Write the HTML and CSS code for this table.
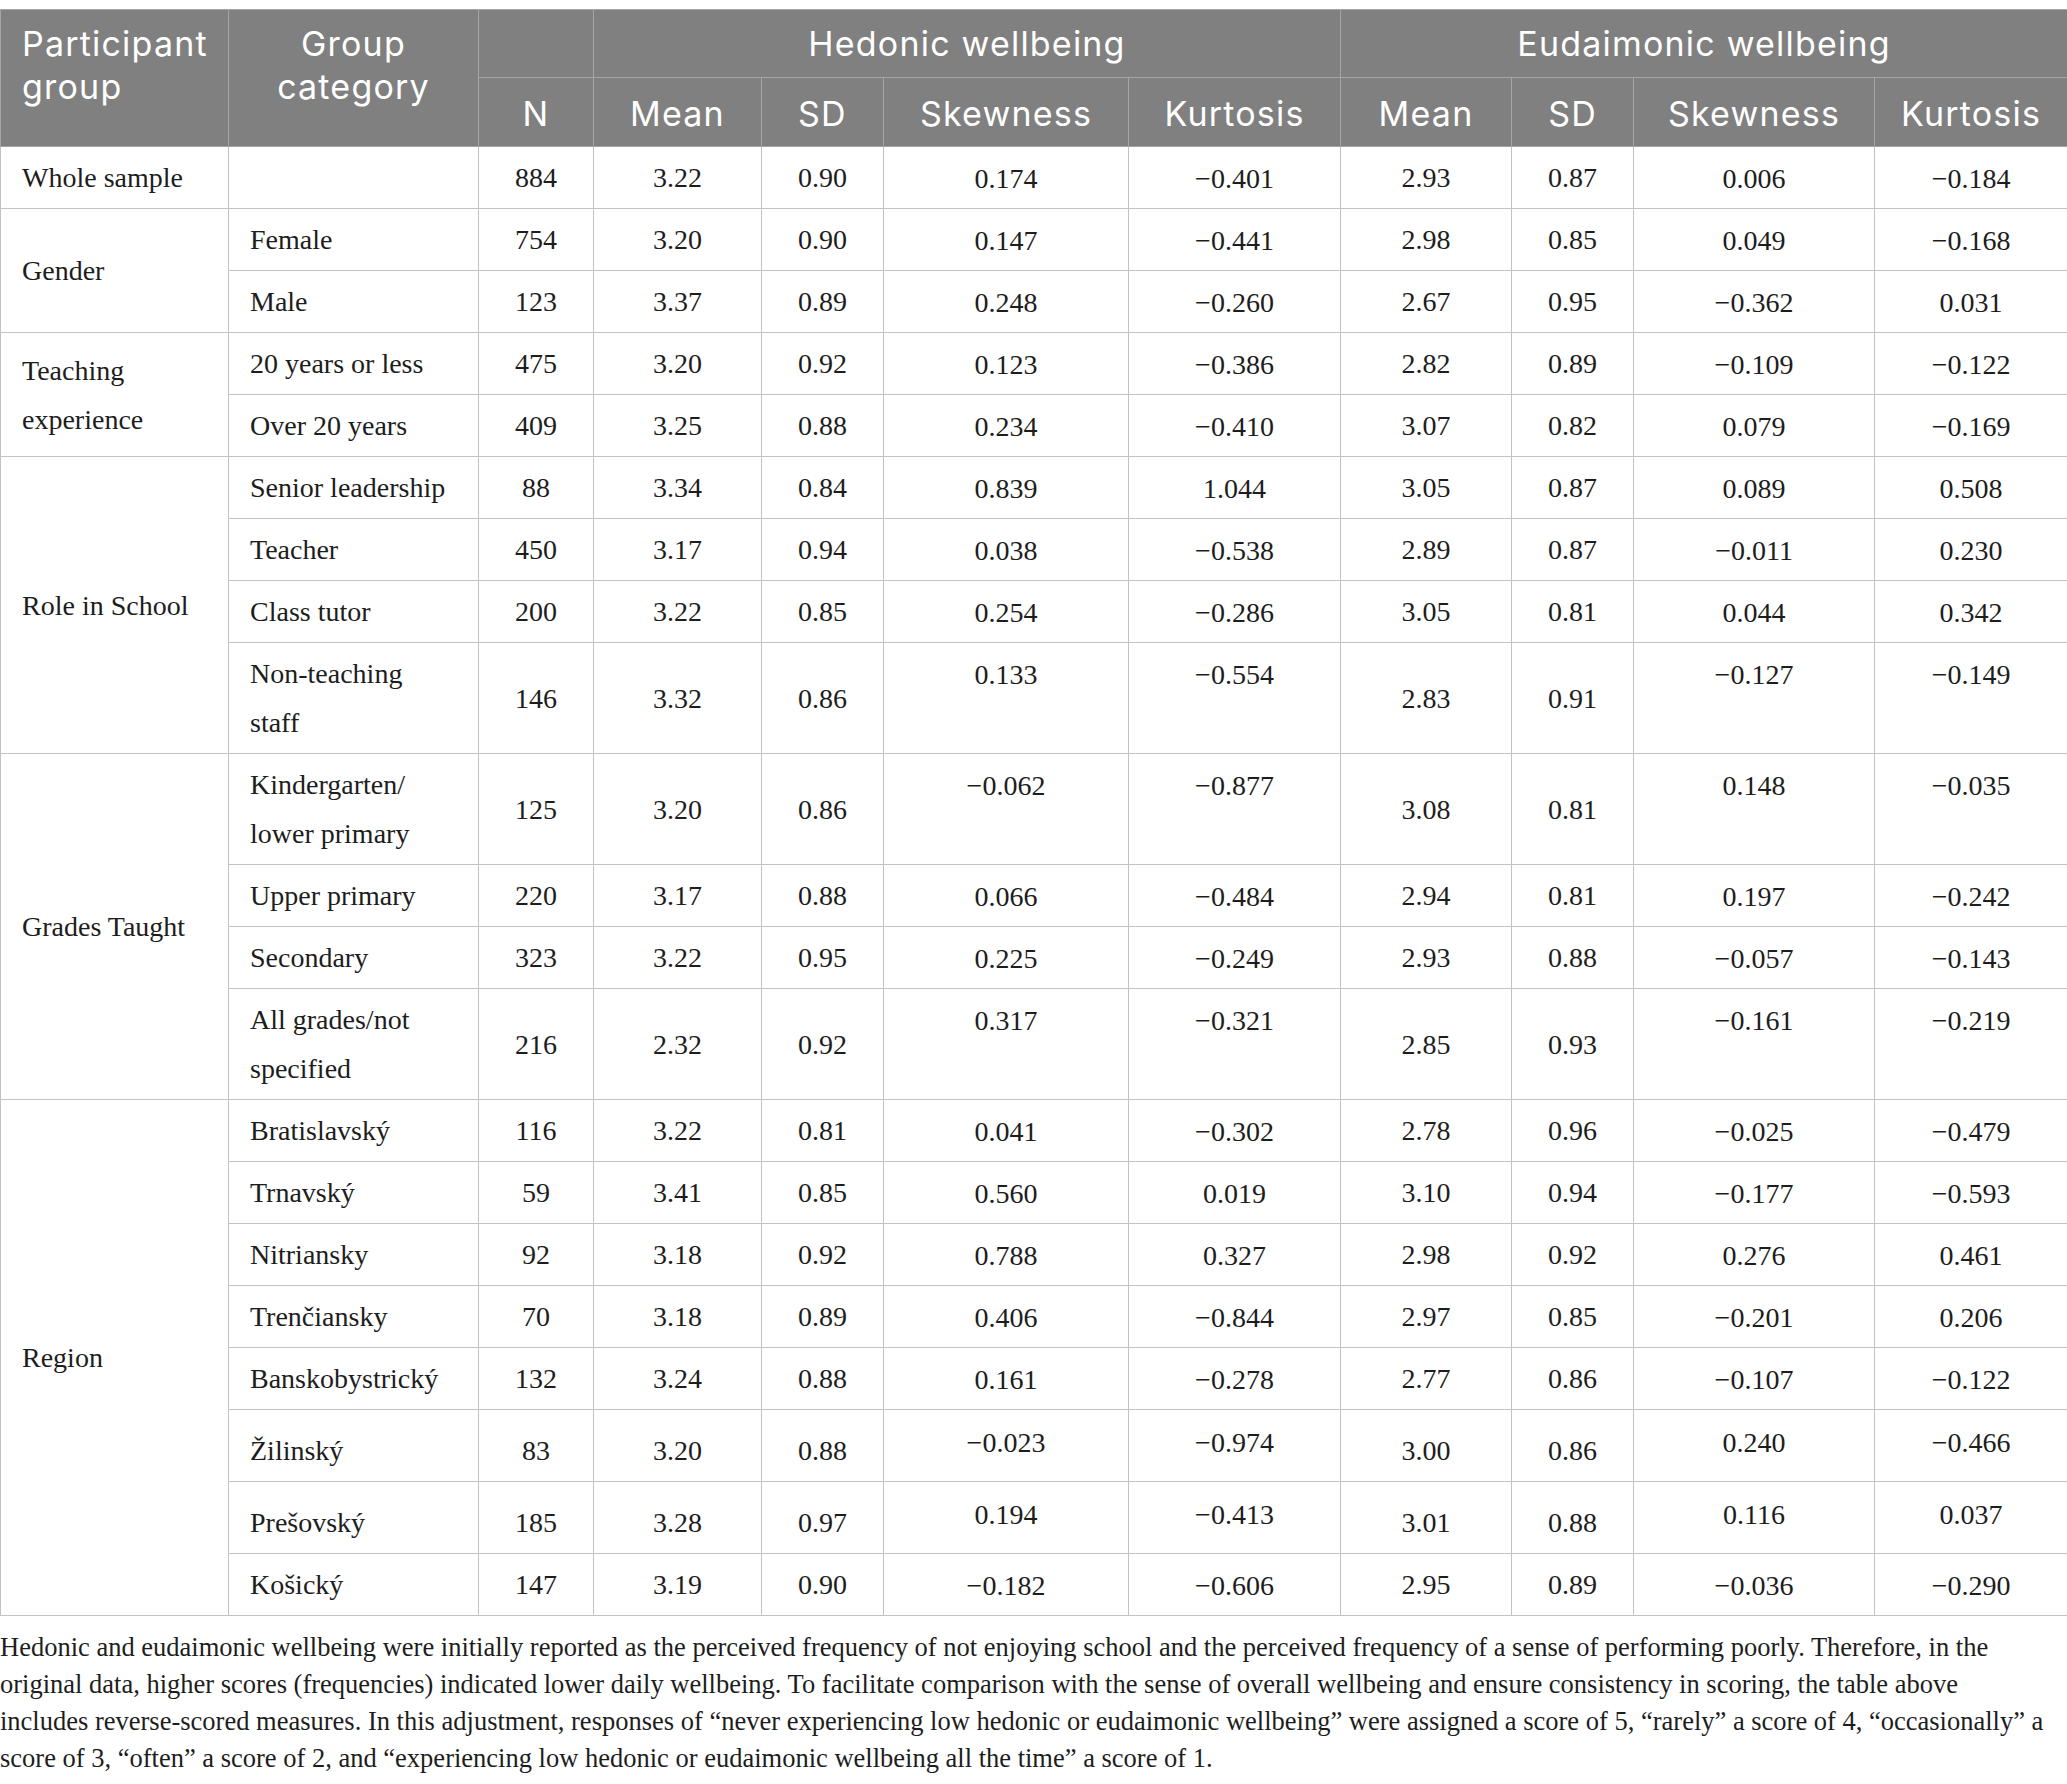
FILE: index.html
```html
<!DOCTYPE html>
<html lang="en">
<head>
<meta charset="utf-8">
<title>Wellbeing table</title>
<link rel="stylesheet" href="styles.css">
</head>
<body>
<table class="data">
  <colgroup>
    <col class="c1"><col class="c2"><col class="c3"><col class="c4"><col class="c5"><col class="c6"><col class="c7"><col class="c8"><col class="c9"><col class="c10"><col class="c11">
  </colgroup>
  <thead>
    <tr class="h1">
      <th rowspan="2" class="hl">Participant<br>group</th>
      <th rowspan="2" class="hc">Group<br>category</th>
      <th></th>
      <th colspan="4">Hedonic wellbeing</th>
      <th colspan="4">Eudaimonic wellbeing</th>
    </tr>
    <tr class="h2">
      <th>N</th>
      <th>Mean</th><th>SD</th><th>Skewness</th><th>Kurtosis</th>
      <th>Mean</th><th>SD</th><th>Skewness</th><th>Kurtosis</th>
    </tr>
  </thead>
  <tbody>
    <tr>
      <td class="grp">Whole sample</td><td class="cat"></td>
      <td class="n">884</td><td class="n">3.22</td><td class="n">0.90</td><td class="n t">0.174</td><td class="n t">−0.401</td><td class="n">2.93</td><td class="n">0.87</td><td class="n t">0.006</td><td class="n t">−0.184</td>
    </tr>
    <tr>
      <td class="grp" rowspan="2">Gender</td><td class="cat">Female</td>
      <td class="n">754</td><td class="n">3.20</td><td class="n">0.90</td><td class="n t">0.147</td><td class="n t">−0.441</td><td class="n">2.98</td><td class="n">0.85</td><td class="n t">0.049</td><td class="n t">−0.168</td>
    </tr>
    <tr>
      <td class="cat">Male</td>
      <td class="n">123</td><td class="n">3.37</td><td class="n">0.89</td><td class="n t">0.248</td><td class="n t">−0.260</td><td class="n">2.67</td><td class="n">0.95</td><td class="n t">−0.362</td><td class="n t">0.031</td>
    </tr>
    <tr>
      <td class="grp" rowspan="2">Teaching<br>experience</td><td class="cat">20 years or less</td>
      <td class="n">475</td><td class="n">3.20</td><td class="n">0.92</td><td class="n t">0.123</td><td class="n t">−0.386</td><td class="n">2.82</td><td class="n">0.89</td><td class="n t">−0.109</td><td class="n t">−0.122</td>
    </tr>
    <tr>
      <td class="cat">Over 20 years</td>
      <td class="n">409</td><td class="n">3.25</td><td class="n">0.88</td><td class="n t">0.234</td><td class="n t">−0.410</td><td class="n">3.07</td><td class="n">0.82</td><td class="n t">0.079</td><td class="n t">−0.169</td>
    </tr>
    <tr>
      <td class="grp" rowspan="4">Role in School</td><td class="cat">Senior leadership</td>
      <td class="n">88</td><td class="n">3.34</td><td class="n">0.84</td><td class="n t">0.839</td><td class="n t">1.044</td><td class="n">3.05</td><td class="n">0.87</td><td class="n t">0.089</td><td class="n t">0.508</td>
    </tr>
    <tr>
      <td class="cat">Teacher</td>
      <td class="n">450</td><td class="n">3.17</td><td class="n">0.94</td><td class="n t">0.038</td><td class="n t">−0.538</td><td class="n">2.89</td><td class="n">0.87</td><td class="n t">−0.011</td><td class="n t">0.230</td>
    </tr>
    <tr>
      <td class="cat">Class tutor</td>
      <td class="n">200</td><td class="n">3.22</td><td class="n">0.85</td><td class="n t">0.254</td><td class="n t">−0.286</td><td class="n">3.05</td><td class="n">0.81</td><td class="n t">0.044</td><td class="n t">0.342</td>
    </tr>
    <tr>
      <td class="cat">Non-teaching<br>staff</td>
      <td class="n">146</td><td class="n">3.32</td><td class="n">0.86</td><td class="n t">0.133</td><td class="n t">−0.554</td><td class="n">2.83</td><td class="n">0.91</td><td class="n t">−0.127</td><td class="n t">−0.149</td>
    </tr>
    <tr>
      <td class="grp" rowspan="4">Grades Taught</td><td class="cat">Kindergarten/<br>lower primary</td>
      <td class="n">125</td><td class="n">3.20</td><td class="n">0.86</td><td class="n t">−0.062</td><td class="n t">−0.877</td><td class="n">3.08</td><td class="n">0.81</td><td class="n t">0.148</td><td class="n t">−0.035</td>
    </tr>
    <tr>
      <td class="cat">Upper primary</td>
      <td class="n">220</td><td class="n">3.17</td><td class="n">0.88</td><td class="n t">0.066</td><td class="n t">−0.484</td><td class="n">2.94</td><td class="n">0.81</td><td class="n t">0.197</td><td class="n t">−0.242</td>
    </tr>
    <tr>
      <td class="cat">Secondary</td>
      <td class="n">323</td><td class="n">3.22</td><td class="n">0.95</td><td class="n t">0.225</td><td class="n t">−0.249</td><td class="n">2.93</td><td class="n">0.88</td><td class="n t">−0.057</td><td class="n t">−0.143</td>
    </tr>
    <tr>
      <td class="cat">All grades/not<br>specified</td>
      <td class="n">216</td><td class="n">2.32</td><td class="n">0.92</td><td class="n t">0.317</td><td class="n t">−0.321</td><td class="n">2.85</td><td class="n">0.93</td><td class="n t">−0.161</td><td class="n t">−0.219</td>
    </tr>
    <tr>
      <td class="grp" rowspan="8">Region</td><td class="cat">Bratislavský</td>
      <td class="n">116</td><td class="n">3.22</td><td class="n">0.81</td><td class="n t">0.041</td><td class="n t">−0.302</td><td class="n">2.78</td><td class="n">0.96</td><td class="n t">−0.025</td><td class="n t">−0.479</td>
    </tr>
    <tr>
      <td class="cat">Trnavský</td>
      <td class="n">59</td><td class="n">3.41</td><td class="n">0.85</td><td class="n t">0.560</td><td class="n t">0.019</td><td class="n">3.10</td><td class="n">0.94</td><td class="n t">−0.177</td><td class="n t">−0.593</td>
    </tr>
    <tr>
      <td class="cat">Nitriansky</td>
      <td class="n">92</td><td class="n">3.18</td><td class="n">0.92</td><td class="n t">0.788</td><td class="n t">0.327</td><td class="n">2.98</td><td class="n">0.92</td><td class="n t">0.276</td><td class="n t">0.461</td>
    </tr>
    <tr>
      <td class="cat">Trenčiansky</td>
      <td class="n">70</td><td class="n">3.18</td><td class="n">0.89</td><td class="n t">0.406</td><td class="n t">−0.844</td><td class="n">2.97</td><td class="n">0.85</td><td class="n t">−0.201</td><td class="n t">0.206</td>
    </tr>
    <tr>
      <td class="cat">Banskobystrický</td>
      <td class="n">132</td><td class="n">3.24</td><td class="n">0.88</td><td class="n t">0.161</td><td class="n t">−0.278</td><td class="n">2.77</td><td class="n">0.86</td><td class="n t">−0.107</td><td class="n t">−0.122</td>
    </tr>
    <tr class="tall">
      <td class="cat">Žilinský</td>
      <td class="n">83</td><td class="n">3.20</td><td class="n">0.88</td><td class="n t">−0.023</td><td class="n t">−0.974</td><td class="n">3.00</td><td class="n">0.86</td><td class="n t">0.240</td><td class="n t">−0.466</td>
    </tr>
    <tr class="tall">
      <td class="cat">Prešovský</td>
      <td class="n">185</td><td class="n">3.28</td><td class="n">0.97</td><td class="n t">0.194</td><td class="n t">−0.413</td><td class="n">3.01</td><td class="n">0.88</td><td class="n t">0.116</td><td class="n t">0.037</td>
    </tr>
    <tr>
      <td class="cat">Košický</td>
      <td class="n">147</td><td class="n">3.19</td><td class="n">0.90</td><td class="n t">−0.182</td><td class="n t">−0.606</td><td class="n">2.95</td><td class="n">0.89</td><td class="n t">−0.036</td><td class="n t">−0.290</td>
    </tr>
  </tbody>
</table>
<p class="note">Hedonic and eudaimonic wellbeing were initially reported as the perceived frequency of not enjoying school and the perceived frequency of a sense of performing poorly. Therefore, in the<br>original data, higher scores (frequencies) indicated lower daily wellbeing. To facilitate comparison with the sense of overall wellbeing and ensure consistency in scoring, the table above<br>includes reverse-scored measures. In this adjustment, responses of “never experiencing low hedonic or eudaimonic wellbeing” were assigned a score of 5, “rarely” a score of 4, “occasionally” a<br>score of 3, “often” a score of 2, and “experiencing low hedonic or eudaimonic wellbeing all the time” a score of 1.</p>
</body>
</html>
```
FILE: styles.css
```css
html, body {
  margin: 0;
  padding: 0;
  background: #ffffff;
}

body {
  padding-top: 9px;
  width: 2067px;
}

.data {
  width: 2067px;
  border-collapse: collapse;
  table-layout: fixed;
}

.c1 { width: 228px; }
.c2 { width: 250px; }
.c3 { width: 115px; }
.c4 { width: 168px; }
.c5 { width: 122px; }
.c6 { width: 245px; }
.c7 { width: 212px; }
.c8 { width: 171px; }
.c9 { width: 122px; }
.c10 { width: 241px; }
.c11 { width: 193px; }

.data th {
  background: #808080;
  color: #ffffff;
  font-family: "Inter", "Open Sans", sans-serif;
  font-weight: 400;
  font-size: 34px;
  letter-spacing: 1.2px;
  line-height: 43px;
  text-align: center;
  vertical-align: top;
  border: 1px solid #a5a5a5;
  padding: 12px 0 12px;
}

.data .h2 th {
  padding: 14px 0 11px;
}

.data th.hl {
  text-align: left;
  padding-left: 21px;
}

.data td {
  font-family: "Liberation Serif", "Times New Roman", serif;
  font-size: 28px;
  line-height: 49px;
  color: #1d1d1d;
  border: 1px solid #c2c2c2;
  padding: 6px 6px 6px 21px;
  vertical-align: middle;
  white-space: nowrap;
}

.data td.n {
  text-align: center;
  padding-left: 0;
  padding-right: 0;
}

.data td.t {
  vertical-align: top;
  padding-top: 7px;
  padding-bottom: 5px;
}

.data tr.tall td {
  padding-top: 16px;
  padding-bottom: 6px;
}

.data tr.tall td.t {
  padding-top: 8px;
  padding-bottom: 5px;
}

.note {
  margin: 13px 0 0;
  font-family: "Liberation Serif", "Times New Roman", serif;
  font-size: 26.5px;
  line-height: 37px;
  color: #1d1d1d;
  white-space: nowrap;
}
```
